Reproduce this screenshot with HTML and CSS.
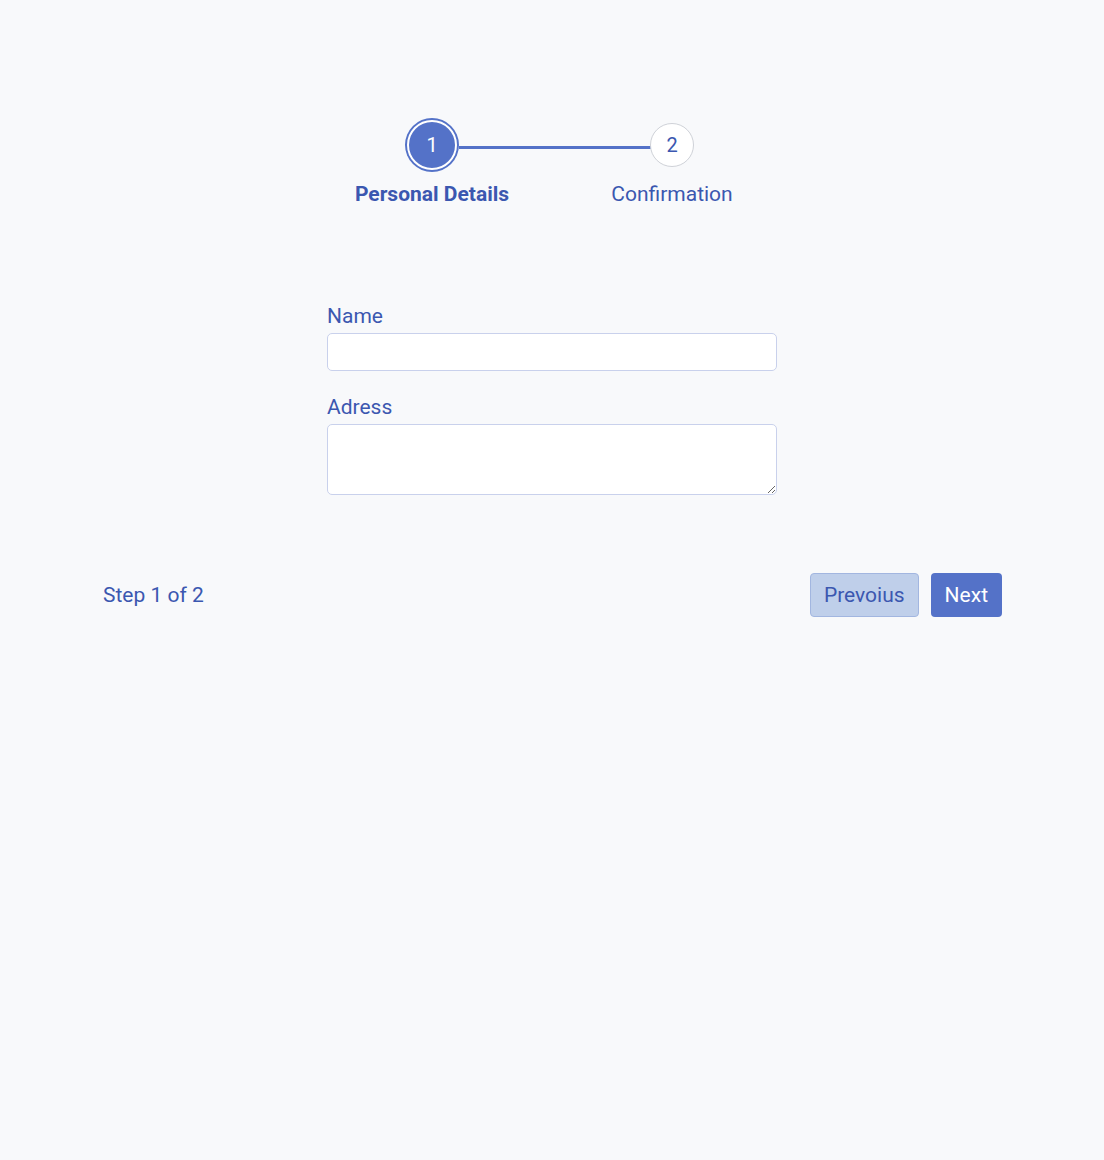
FILE: index.html
```html
<!DOCTYPE html>
<html>
  <head>
    <meta charset="UTF-8">
    <meta name="viewport" content="width=device-width, initial-scale=1">
    <link rel="stylesheet" href="styles.css">
  </head>
  <body>
    <div class="pagina">
      <div class="pasos">
        <div class="paso activo">
          <div class="circulo">1</div>
          <div class="etiqueta">Personal Details</div>
        </div>
        <div class="paso">
          <div class="circulo">2</div>
          <div class="etiqueta">Confirmation</div>
        </div>
      </div>

      <form class="formulario">
        <label class="campo">
          <span class="texto">Name</span>
          <input type="text" class="entrada">
        </label>
        <label class="campo">
          <span class="texto">Adress</span>
          <textarea class="entrada area"></textarea>
        </label>
      </form>

      <div class="pie">
        <span class="contador">Step 1 of 2</span>
        <div class="botones">
          <button class="boton claro">Prevoius</button>
          <button class="boton fuerte">Next</button>
        </div>
      </div>
    </div>
  </body>
</html>
```

FILE: styles.css
```css
html{background-color: #f8f9fb;}
body{
  margin: 0;
  font-family: Roboto, "Liberation Sans", sans-serif;
  color: #3b57b0;
}
.pagina{
  width: 900px;
  margin: 0 auto;
  padding-top: 118px;
}
.pasos{
  position: relative;
  width: 480px;
  margin: 0 auto;
  display: flex;
}
/* linea entre los dos circulos */
.pasos::before{
  content: "";
  position: absolute;
  top: 28px;
  left: 147px;
  width: 194px;
  height: 3px;
  background-color: #5472c8;
}
.paso{
  width: 240px;
  display: flex;
  flex-direction: column;
  align-items: center;
  position: relative;
}
.circulo{
  width: 42px;
  height: 42px;
  margin-top: 5px;
  border-radius: 50%;
  border: 1px solid #cfd2d8;
  background-color: white;
  display: flex;
  justify-content: center;
  align-items: center;
  font-size: 20px;
  color: #3b57b0;
}
.paso.activo .circulo{
  width: 46px;
  height: 46px;
  margin: 2px 0 0 0;
  border: 2px solid white;
  box-shadow: 0 0 0 2px #5472c8;
  background-color: #5472c8;
  color: white;
}
.paso .etiqueta{
  margin-top: 15px;
  font-size: 21px;
  line-height: 25px;
}
.paso.activo .etiqueta{
  margin-top: 12px;
  font-weight: bold;
}
.formulario{
  width: 450px;
  margin: 97px auto 0 auto;
}
.campo{
  display: block;
  margin-bottom: 24px;
}
.campo .texto{
  display: block;
  font-size: 21px;
  line-height: 25px;
  margin-bottom: 4px;
}
.entrada{
  display: block;
  box-sizing: border-box;
  width: 100%;
  height: 38px;
  border: 1px solid #c9d1ec;
  border-radius: 5px;
  background-color: white;
  font-family: inherit;
  font-size: 16px;
  padding: 6px 10px;
  outline: none;
}
.entrada.area{
  height: 71px;
  resize: vertical;
}
.pie{
  display: flex;
  justify-content: space-between;
  align-items: center;
  margin-top: 78px;
}
.contador{
  font-size: 21px;
  padding-left: 1px;
}
.botones{
  display: flex;
  gap: 12px;
}
.boton{
  height: 44px;
  padding: 0 13px;
  border-radius: 4px;
  font-family: inherit;
  font-size: 21px;
  border: 1px solid transparent;
}
.boton.claro{
  background-color: #bfcfea;
  border-color: #a2b6e0;
  color: #3b57b0;
}
.boton.fuerte{
  background-color: #5472c8;
  color: white;
}
```
